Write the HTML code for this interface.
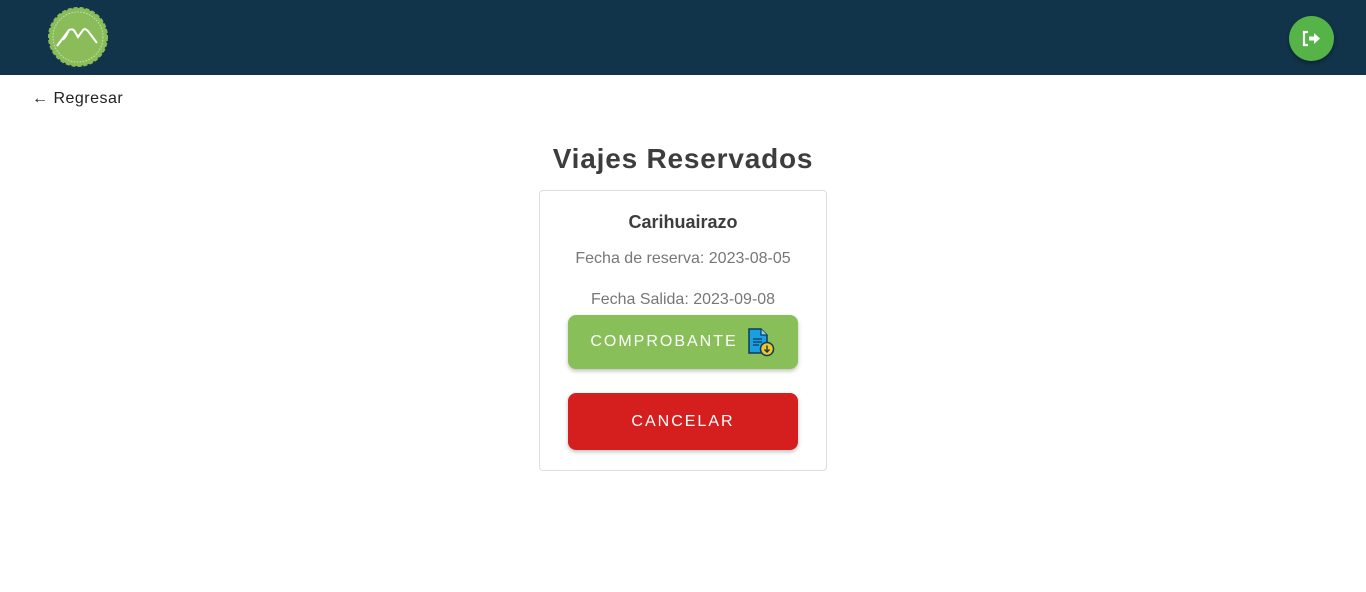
<!DOCTYPE html>
<html><head><meta charset="utf-8"><style>
body{margin:0;width:1366px;height:592px;background:#fff;font-family:"Liberation Sans",sans-serif;position:relative;overflow:hidden}
.hdr{position:absolute;left:0;top:0;width:1366px;height:75px;background:#12344a}
.back{position:absolute;left:32px;top:90px;font-size:16px;color:#222;letter-spacing:.5px}
h1{position:absolute;left:0;width:1366px;top:143px;margin:0;text-align:center;font-size:28px;font-weight:bold;color:#3d3d3d;letter-spacing:0.8px}
.card{position:absolute;left:539px;top:190px;width:286px;height:279px;border:1px solid #ddd;border-radius:4px}
.t{position:absolute;width:100%;text-align:center}
.btn{position:absolute;left:28px;width:230px;border-radius:8px;color:#fff;font-size:16px;letter-spacing:2px;display:flex;align-items:center;justify-content:center;box-shadow:0 2px 4px rgba(0,0,0,.25)}
</style></head><body>
<div class="hdr">
<svg style="position:absolute;left:47px;top:6px" width="62" height="62" viewBox="0 0 62 62">
<circle cx="31" cy="31" r="29" fill="#8abd5a" stroke="#8abd5a" stroke-width="2" stroke-dasharray="4 2"/>
<circle cx="31" cy="31" r="25" fill="none" stroke="#d8eac5" stroke-width="0.8" stroke-dasharray="1.5 1.5"/>
<path d="M10 40 L22 24 Q26 22 28 26 L31 31 L36 24 Q38 22 41 25 L50 37" fill="none" stroke="#fff" stroke-width="2"/>
<path d="M22 24 Q20 30 16 34" fill="none" stroke="#fff" stroke-width="1.5"/>
</svg>
<div style="position:absolute;left:1289px;top:16px;width:45px;height:45px;border-radius:50%;background:#56b347;box-shadow:0 2px 5px rgba(0,0,0,.35)">
<svg style="position:absolute;left:13px;top:14px" width="19" height="17" viewBox="0 0 19 17"><path d="M6 2H2v13h4" fill="none" stroke="#fff" stroke-width="2.2"/><path d="M7 6.5h5V3l6 5.5-6 5.5v-3.5H7z" fill="#fff"/></svg>
</div>
</div>
<div class="back">&#8592; Regresar</div>
<h1>Viajes Reservados</h1>
<div class="card">
<div class="t" style="top:21px;font-size:18px;font-weight:bold;color:#3d3d3d">Carihuairazo</div>
<div class="t" style="top:59px;font-size:16px;color:#777">Fecha de reserva: 2023-08-05</div>
<div class="t" style="top:100px;font-size:16px;color:#777">Fecha Salida: 2023-09-08</div>
<div class="btn" style="top:124px;height:54px;background:#88bf59">COMPROBANTE
<svg style="margin-left:8px" width="30" height="30" viewBox="0 0 30 30"><path d="M3 2h12l6 6v18H3z" fill="#1a9fe0" stroke="#0d3a5a" stroke-width="1.5"/><path d="M15 2v6h6" fill="#8fd4f5" stroke="#0d3a5a" stroke-width="1.2"/><path d="M7 12h9M7 15h9M7 18h6" stroke="#0d3a5a" stroke-width="1.2"/><circle cx="21" cy="22" r="6.5" fill="#f3c623" stroke="#0d3a5a" stroke-width="1.5"/><path d="M21 18.5v6M18.5 22.5l2.5 2.5 2.5-2.5" fill="none" stroke="#0d3a5a" stroke-width="1.4"/></svg></div>
<div class="btn" style="top:202px;height:57px;background:#d51f1f">CANCELAR</div>
</div>
</body></html>
